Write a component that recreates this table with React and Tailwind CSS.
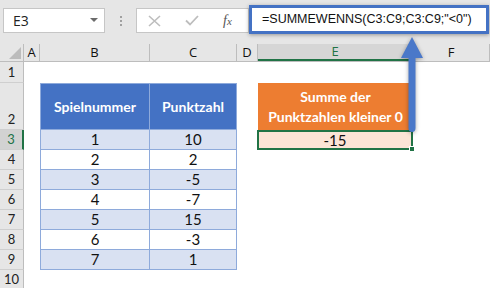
import React from 'react';

// Column widths of the sheet grid (row header, A..F)
const COLS = [
  { key: 'A', w: 'w-[16px]' },
  { key: 'B', w: 'w-[110px]' },
  { key: 'C', w: 'w-[87px]' },
  { key: 'D', w: 'w-[21px]' },
  { key: 'E', w: 'w-[155px]' },
  { key: 'F', w: 'flex-1' },
];

const SCORES = [
  [1, 10],
  [2, 2],
  [3, -5],
  [4, -7],
  [5, 15],
  [6, -3],
  [7, 1],
];

const cellFont = "font-['Lato','Open_Sans',sans-serif]";

const RowHeader = ({ n, h, active }) => (
  <div
    className={`w-[24px] ${h} shrink-0 flex items-end justify-center border-b border-[#cfcfcf] text-[13px] leading-[19px] ${cellFont} ${
      active
        ? 'bg-[#d2d2d2] text-[#217346] border-r-2 border-r-[#217346]'
        : 'bg-[#e6e6e6] text-[#222] border-r border-r-[#bdbdbd]'
    }`}
  >
    {n}
  </div>
);

const TableCell = ({ w, children, first, striped }) => (
  <div
    className={`${w} h-full shrink-0 flex items-center justify-center border-r border-b border-[#8eaadb] text-[15px] text-[#111] ${cellFont} ${
      first ? 'border-l' : ''
    } ${striped ? 'bg-[#d9e1f2]' : 'bg-white'}`}
  >
    {children}
  </div>
);

export default function App() {
  return (
    <div className="w-[490px] h-[288px] overflow-hidden bg-white relative font-['Liberation_Sans',sans-serif]">
      {/* Name box + formula bar */}
      <div className="h-[44px] bg-[#e6e6e6] flex items-start">
        <div className="ml-[3px] mt-[8px] w-[102px] h-[25px] bg-white border border-[#c6c6c6] flex items-center justify-between pl-[9px] pr-[6px]">
          <span className="text-[14px] text-[#222] font-['Open_Sans',sans-serif]">E3</span>
          <svg width="8" height="5" viewBox="0 0 8 5">
            <path d="M0 0h8L4 4z" fill="#6b6b6b" />
          </svg>
        </div>
        <div className="w-[31px] h-[44px] flex flex-col items-center justify-center gap-[2px] pb-[3px]">
          <span className="w-[2px] h-[2px] bg-[#a0a0a0]" />
          <span className="w-[2px] h-[2px] bg-[#a0a0a0]" />
          <span className="w-[2px] h-[2px] bg-[#a0a0a0]" />
        </div>
        <div className="mt-[8px] w-[113px] h-[25px] bg-white border border-[#c6c6c6] flex items-center">
          <svg className="ml-[11px]" width="13" height="12" viewBox="0 0 13 12">
            <path d="M1 1l11 10M12 1L1 11" stroke="#bdbdbd" strokeWidth="1.6" />
          </svg>
          <svg className="ml-[24px]" width="14" height="11" viewBox="0 0 14 11">
            <path d="M1 5.5l4 4L13 1" stroke="#bdbdbd" strokeWidth="1.8" fill="none" />
          </svg>
          <span className="ml-[24px] text-[14px] italic text-[#555] font-['Liberation_Serif',serif] leading-none">
            f<span className="text-[11px]">x</span>
          </span>
        </div>
        {/* Formula input, highlighted */}
        <div className="mt-[5px] w-[240px] h-[29px] bg-white border-[3px] border-[#4472c4] shadow-[0_1px_4px_rgba(0,0,0,0.35)] flex items-center pl-[10px] relative z-10">
          <span className="text-[12.5px] text-[#111]">=SUMMEWENNS(C3:C9;C3:C9;"&lt;0")</span>
        </div>
      </div>

      {/* Column headers */}
      <div className="h-[18px] flex bg-[#e6e6e6] border-b border-[#bdbdbd]">
        <div className="w-[24px] shrink-0 border-r border-[#bdbdbd] flex items-end justify-end pr-[2px] pb-[2px]">
          <svg width="12" height="12" viewBox="0 0 12 12">
            <path d="M12 0v12H0z" fill="#bcbcbc" />
          </svg>
        </div>
        {COLS.map((c) => (
          <div
            key={c.key}
            className={`${c.w} shrink-0 flex items-center justify-center text-[13px] font-['Open_Sans',sans-serif] ${
              c.key === 'E'
                ? 'bg-[#d6d6d6] text-[#217346] border-b-2 border-[#217346] border-r border-r-[#bdbdbd]'
                : 'text-[#111] border-r border-[#bdbdbd]'
            }`}
          >
            {c.key}
          </div>
        ))}
      </div>

      {/* Row 1 */}
      <div className="flex h-[21px]">
        <RowHeader n={1} h="h-[21px]" />
      </div>

      {/* Row 2: table headers */}
      <div className="flex h-[47px]">
        <RowHeader n={2} h="h-[47px]" />
        <div className="w-[16px] shrink-0" />
        <div className="w-[110px] h-full shrink-0 bg-[#4472c4] border border-[#8eaadb] flex items-center justify-center text-white font-bold text-[14px] font-['Lato',sans-serif]">
          Spielnummer
        </div>
        <div className="w-[87px] h-full shrink-0 bg-[#4472c4] border-y border-r border-[#8eaadb] flex items-center justify-center text-white font-bold text-[14px] font-['Lato',sans-serif]">
          Punktzahl
        </div>
        <div className="w-[21px] shrink-0" />
        <div className="w-[155px] h-full shrink-0 bg-[#ed7d31] flex flex-col items-center justify-center text-white font-bold text-[14px] leading-[20px] font-['Lato',sans-serif]">
          <span>Summe der</span>
          <span>Punktzahlen kleiner 0</span>
        </div>
      </div>

      {/* Rows 3..9 */}
      {SCORES.map(([game, pts], i) => (
        <div key={game} className="flex h-[20px]">
          <RowHeader n={i + 3} h="h-[20px]" active={i === 0} />
          <div className="w-[16px] shrink-0" />
          <TableCell w="w-[110px]" first striped={i % 2 === 0}>
            {game}
          </TableCell>
          <TableCell w="w-[87px]" striped={i % 2 === 0}>
            {pts}
          </TableCell>
          <div className="w-[21px] shrink-0" />
          {i === 0 && (
            <div className="w-[156px] h-[20px] shrink-0 -ml-[1px] bg-[#fce4d6] border-2 border-[#217346] flex items-center justify-center text-[15px] text-[#111] relative font-['Lato',sans-serif]">
              -15
              <span className="absolute -right-[4px] -bottom-[4px] w-[6px] h-[6px] bg-[#217346] border border-white" />
            </div>
          )}
        </div>
      ))}

      {/* Row 10 */}
      <div className="flex h-[20px]">
        <RowHeader n={10} h="h-[20px]" />
      </div>

      {/* Callout arrow from the formula to the result cell */}
      <svg
        className="absolute left-[398px] top-[34px] z-20 drop-shadow-[0_1px_2px_rgba(0,0,0,0.35)]"
        width="28"
        height="102"
        viewBox="0 0 28 102"
      >
        <path
          d="M14 3 L25 24 L17.5 24 L17.5 94 Q17.5 98 14 98 Q10.5 98 10.5 94 L10.5 24 L3 24 Z"
          fill="#4a78c9"
        />
      </svg>
    </div>
  );
}
